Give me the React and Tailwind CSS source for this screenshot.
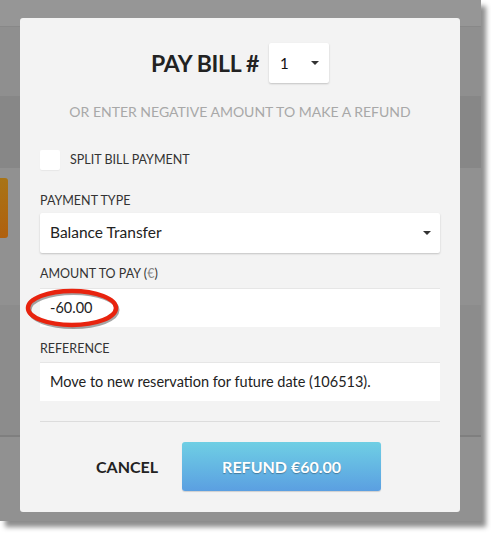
const Caret = () => (
  <svg width="8" height="4" viewBox="0 0 8 4" className="text-[#333]">
    <path d="M0 0h8L4 4z" fill="currentColor" />
  </svg>
);

export default function App() {
  return (
    <div className="w-[491px] h-[533px] bg-white relative" style={{ fontFamily: "Lato, 'Open Sans', sans-serif" }}>
      {/* screenshot frame */}
      <div className="w-[481px] h-[521px] bg-[#8e8e8e] relative overflow-hidden shadow-[5px_6px_5px_rgba(0,0,0,0.45)] flex flex-col">
        <div className="h-[26px] bg-[#969696]" />
        <div className="h-[70px] bg-[#8f8f8f] border-t border-[#888]" />
        <div className="h-[72px] bg-[#878787]" />
        <div className="h-[137px] bg-[#919191]" />
        <div className="h-[130px] bg-[#8c8c8c]" />
        <div className="h-[2px] bg-[#7f7f7f]" />
        <div className="flex-1 bg-[#919191]" />

        {/* orange button peeking on the left */}
        <div className="absolute left-0 top-[178px] w-[8px] h-[60px] rounded-r-[3px] bg-gradient-to-b from-[#a87416] to-[#b0600e]" />

        {/* modal */}
        <div className="absolute left-[20px] top-[18px] w-[440px] h-[494px] bg-[#f3f3f3] rounded-[3px] px-[20px] flex flex-col">
          <div className="flex items-center justify-center gap-[10px] pt-[25px]">
            <span className="text-[23px] font-bold text-[#222] tracking-[-0.3px]">PAY BILL #</span>
            <div className="w-[60px] h-[40px] bg-white rounded-[2px] shadow-[0_1px_2px_rgba(0,0,0,0.2)] flex items-center justify-between pl-[11px] pr-[10px]">
              <span className="text-[15px] text-[#111]">1</span>
              <Caret />
            </div>
          </div>

          <p className="text-center text-[14px] text-[#a8a8a8] mt-[19px] leading-[20px]">
            OR ENTER NEGATIVE AMOUNT TO MAKE A REFUND
          </p>

          <label className="flex items-center gap-[10px] mt-[28px]">
            <span className="w-[20px] h-[20px] bg-white rounded-[2px] shadow-[0_1px_1px_rgba(0,0,0,0.05)]" />
            <span className="text-[12.5px] text-[#333]">SPLIT BILL PAYMENT</span>
          </label>

          <div className="text-[12.5px] text-[#333] mt-[22px] leading-[18px]">PAYMENT TYPE</div>
          <div className="mt-[3px] h-[40px] bg-white rounded-[2px] shadow-[0_1px_2px_rgba(0,0,0,0.2)] flex items-center justify-between pl-[10px] pr-[9px]">
            <span className="text-[15.5px] text-[#222]">Balance Transfer</span>
            <Caret />
          </div>

          <div className="text-[12.5px] text-[#333] mt-[12px] leading-[18px]">
            AMOUNT TO PAY (<span className="text-[#888]">€</span>)
          </div>
          <div className="mt-[5px] h-[39px] bg-white border-t border-[#e6e6e6] flex items-center pl-[10px] relative">
            <span className="text-[14.5px] text-[#222]">-60.00</span>
            {/* red annotation ellipse */}
            <svg className="absolute left-[-16px] top-[-3px]" width="100" height="46" viewBox="0 0 100 46">
              <ellipse cx="48" cy="22" rx="44" ry="17" fill="none" stroke="rgba(0,0,0,0.35)" strokeWidth="4" transform="translate(1.5 2)" />
              <ellipse cx="48" cy="22" rx="44" ry="17" fill="none" stroke="#e8230e" strokeWidth="4.5" />
            </svg>
          </div>

          <div className="text-[12.5px] text-[#333] mt-[13px] leading-[18px]">REFERENCE</div>
          <div className="mt-[4px] h-[39px] bg-white border-t border-[#e6e6e6] flex items-center pl-[10px]">
            <span className="text-[14.5px] text-[#222]">Move to new reservation for future date (106513).</span>
          </div>

          <div className="mt-[20px] h-px bg-[#dcdcdc]" />

          <div className="flex items-center mt-[20px] pl-[56px] gap-[24px]">
            <div className="text-[16px] font-bold text-[#222]">CANCEL</div>
            <button className="w-[199px] h-[49px] rounded-[3px] bg-gradient-to-b from-[#6fcfe4] to-[#5b9fe1] text-white text-[16px] font-bold shadow-[0_1px_1px_rgba(0,0,0,0.15)] [text-shadow:0_1px_1px_rgba(0,0,0,0.3)]">
              REFUND €60.00
            </button>
          </div>
        </div>
      </div>
    </div>
  );
}
